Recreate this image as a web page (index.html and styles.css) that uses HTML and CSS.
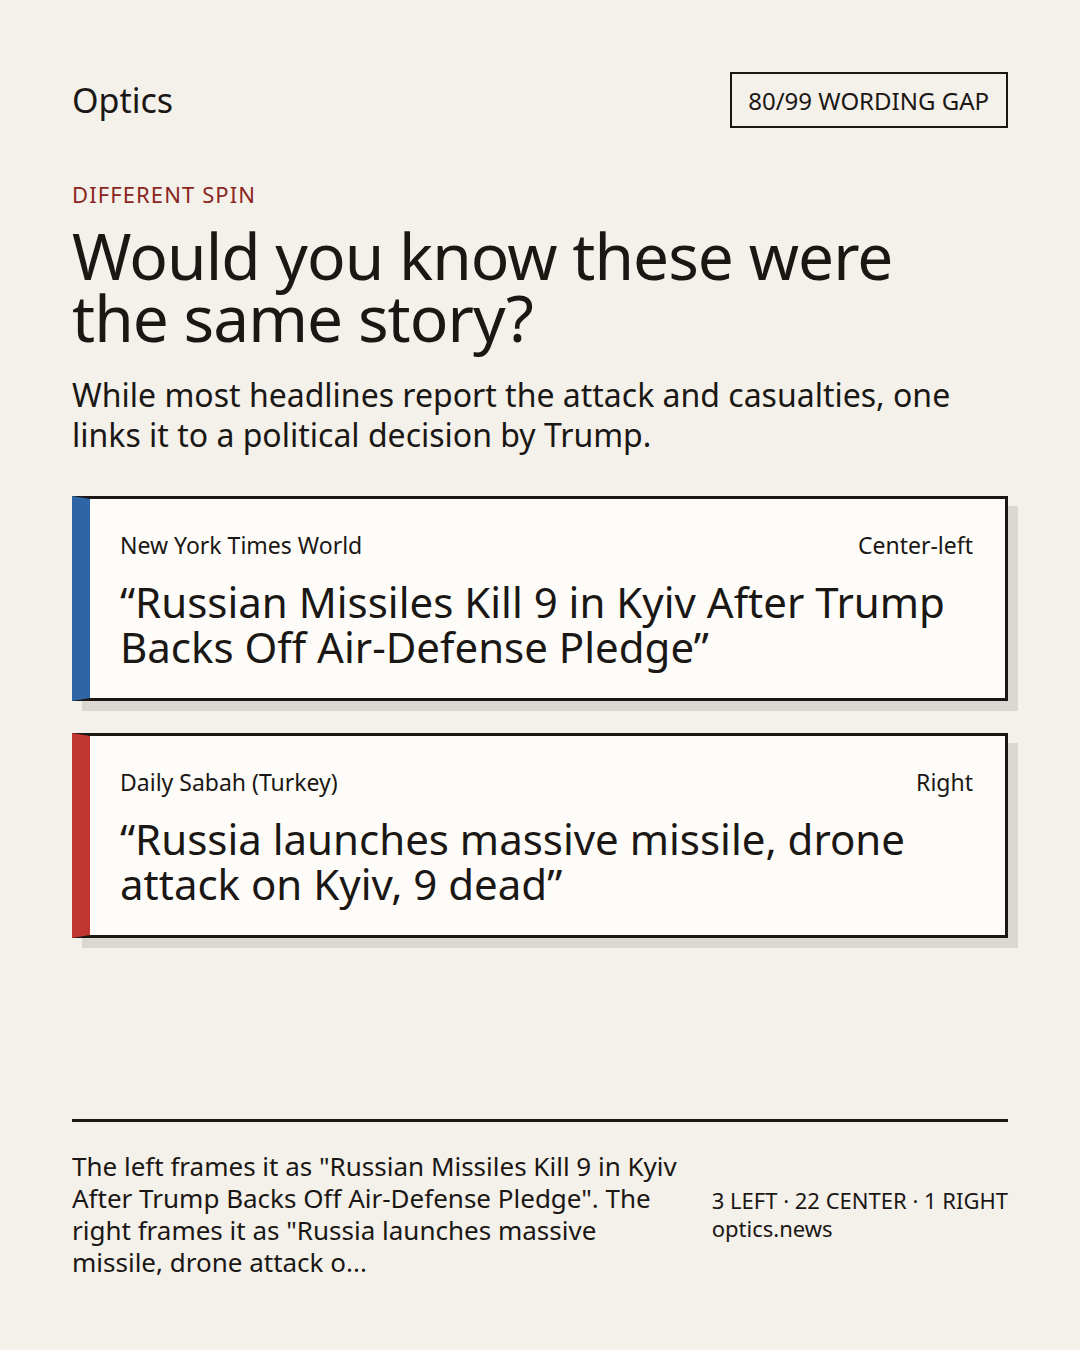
FILE: index.html
```html
<!DOCTYPE html>
<html lang="en">
<head>
<meta charset="utf-8">
<title>Optics</title>
<link rel="stylesheet" href="styles.css">
</head>
<body>
<div class="page">
  <header class="top">
    <div class="brand">Optics</div>
    <div class="badge">80/99 WORDING GAP</div>
  </header>

  <div class="kicker">DIFFERENT SPIN</div>
  <h1 class="title">Would you know these were the same story?</h1>
  <p class="lede">While most headlines report the attack and casualties, one links it to a political decision by Trump.</p>

  <div class="cards">
    <article class="card card-left">
      <div class="meta">
        <span class="source">New York Times World</span>
        <span class="lean">Center-left</span>
      </div>
      <div class="headline">“Russian Missiles Kill 9 in Kyiv After Trump Backs Off Air-Defense Pledge”</div>
    </article>
    <article class="card card-right">
      <div class="meta">
        <span class="source">Daily Sabah (Turkey)</span>
        <span class="lean">Right</span>
      </div>
      <div class="headline">“Russia launches massive missile, drone attack on Kyiv, 9 dead”</div>
    </article>
  </div>

  <footer class="foot">
    <p class="summary">The left frames it as "Russian Missiles Kill 9 in Kyiv After Trump Backs Off Air-Defense Pledge". The right frames it as "Russia launches massive missile, drone attack o...</p>
    <div class="stats">
      <div class="counts">3 LEFT · 22 CENTER · 1 RIGHT</div>
      <div class="site">optics.news</div>
    </div>
  </footer>
</div>
</body>
</html>
```

FILE: styles.css
```css
* { box-sizing: border-box; }
html, body { margin: 0; padding: 0; }
body {
  background: #f4f0ea;
  color: #1a1714;
  font-family: "Noto Sans", "Open Sans", sans-serif;
}
.page {
  width: 1080px;
  height: 1350px;
  padding: 72px;
  display: flex;
  flex-direction: column;
}
.top {
  display: flex;
  justify-content: space-between;
  align-items: center;
  height: 56px;
}
.brand {
  font-size: 34px;
  line-height: 40px;
}
.badge {
  border: 2px solid #1a1714;
  height: 56px;
  padding: 0 17px 0 16px;
  display: flex;
  align-items: center;
  font-size: 24px;
}
.kicker {
  margin-top: 51px;
  font-size: 22px;
  line-height: 30px;
  color: #8a2620;
  letter-spacing: 0.05em;
}
.title {
  margin: 16px 0 0;
  font-weight: 400;
  font-size: 64px;
  line-height: 62px;
  max-width: 880px;
  letter-spacing: -0.015em;
}
.lede {
  margin: 26px 0 0;
  font-size: 32px;
  line-height: 40px;
}
.cards {
  margin-top: 41px;
  display: flex;
  flex-direction: column;
  gap: 32px;
}
.card {
  background: #fdfcf8;
  border: 3px solid #1a1714;
  border-left: 18px solid #2f65a7;
  box-shadow: 10px 10px 0 #dbd8d1;
  padding: 31px 32px 29px 30px;
}
.card-right { border-left-color: #c0352f; }
.meta {
  display: flex;
  justify-content: space-between;
  font-size: 23px;
  line-height: 30px;
}
.headline {
  margin-top: 19px;
  font-size: 42px;
  line-height: 45px;
}
.foot {
  margin-top: auto;
  border-top: 3px solid #1a1714;
  padding-top: 28px;
  display: flex;
  align-items: center;
  gap: 32px;
}
.summary {
  flex: 1;
  margin: 0;
  font-size: 26px;
  line-height: 32px;
}
.stats {
  font-size: 22px;
  line-height: 28px;
  white-space: nowrap;
}
```
